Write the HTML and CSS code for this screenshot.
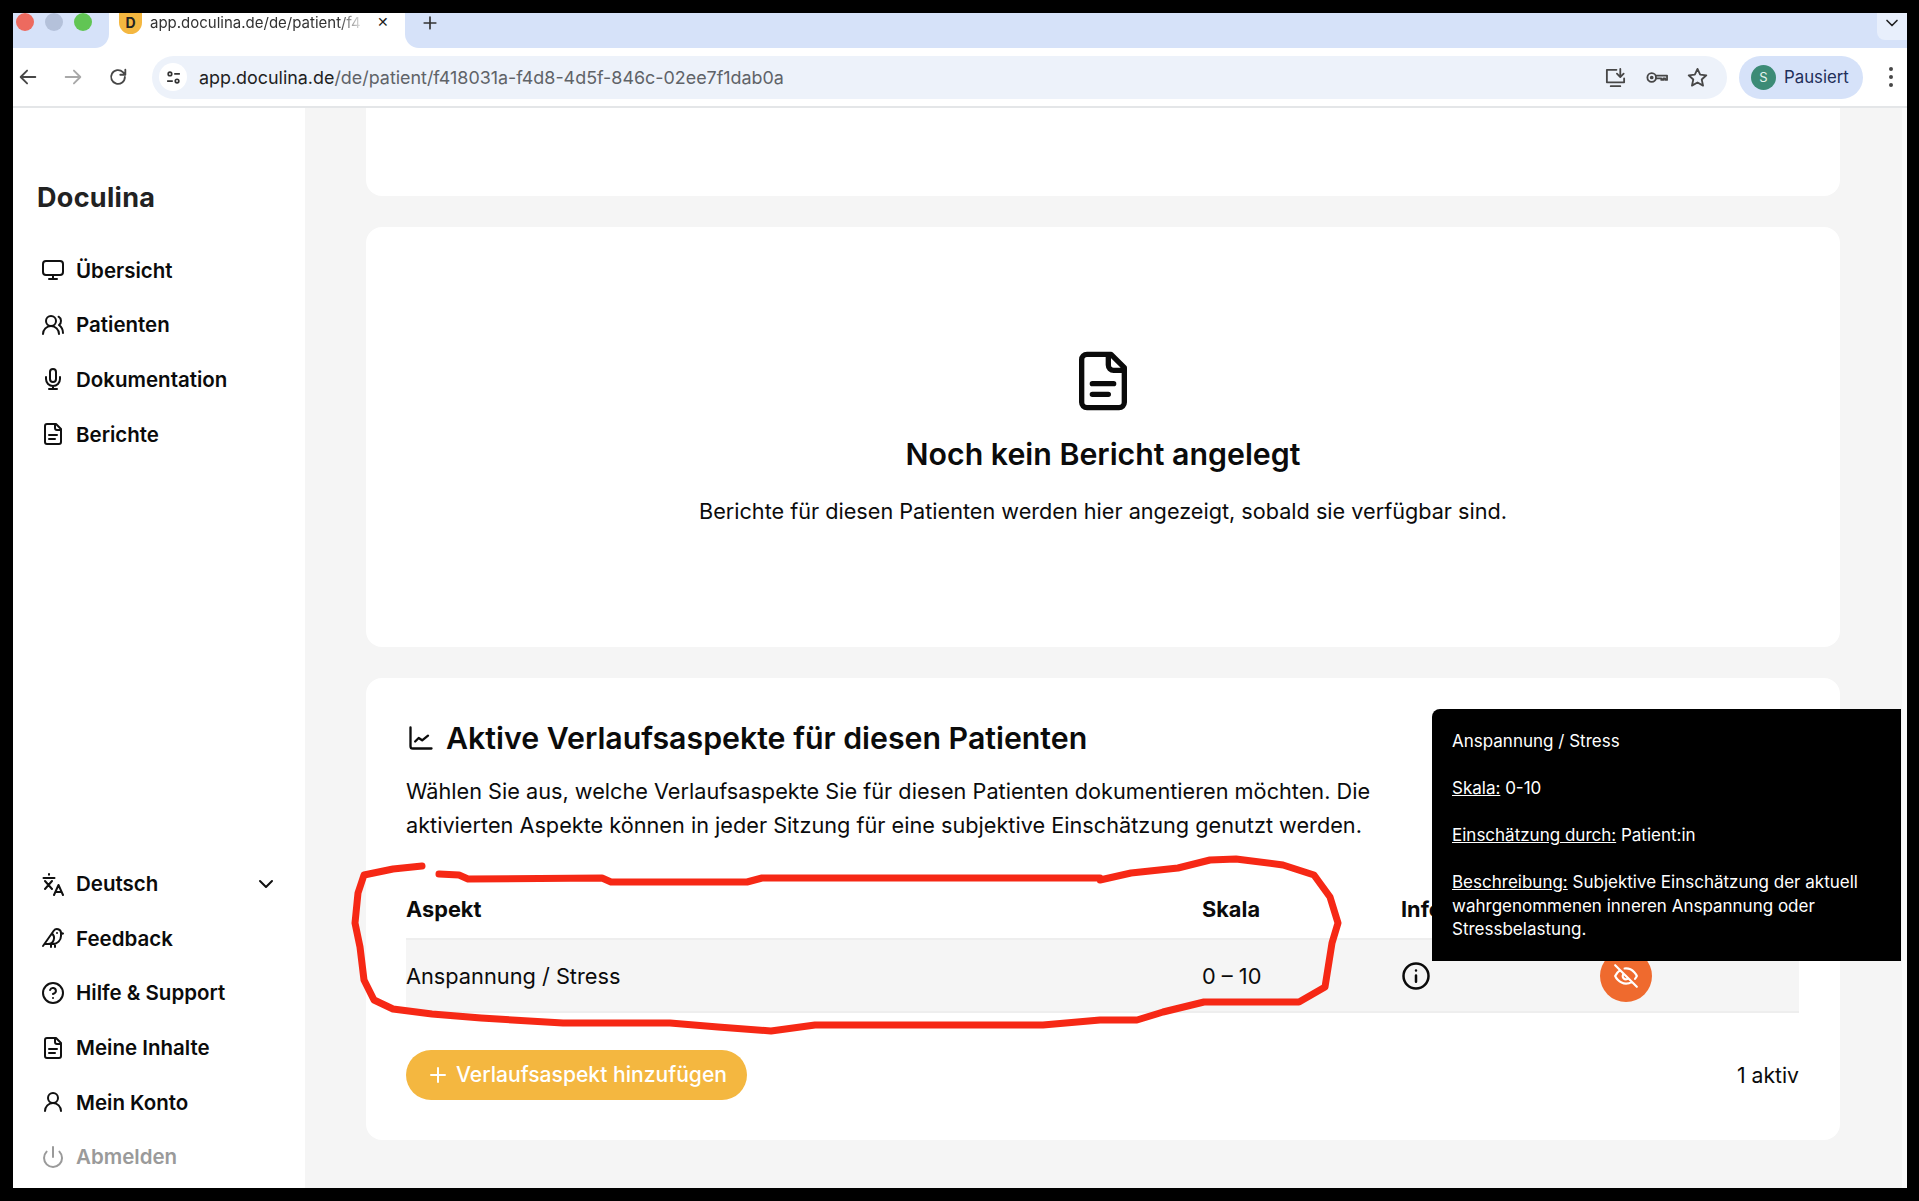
FILE: index.html
```html
<!DOCTYPE html>
<html lang="de">
<head>
<meta charset="utf-8">
<title>Doculina</title>
<link rel="stylesheet" href="styles.css">
</head>
<body>
<svg class="sprite" width="0" height="0" aria-hidden="true">
  <symbol id="i-monitor" viewBox="0 0 24 24"><rect x="2" y="3" width="20" height="14" rx="3"/><path d="M8 21h8M12 17v4"/></symbol>
  <symbol id="i-users" viewBox="0 0 24 24"><circle cx="10" cy="8" r="5"/><path d="M18 21a8 8 0 0 0-16 0M22 20c0-3.37-2-6.5-4-8a5 5 0 0 0-.45-8.3"/></symbol>
  <symbol id="i-mic" viewBox="0 0 24 24"><path d="M12 2a3 3 0 0 0-3 3v7a3 3 0 0 0 6 0V5a3 3 0 0 0-3-3ZM19 10v2a7 7 0 0 1-14 0v-2M12 19v3M8 22h8"/></symbol>
  <symbol id="i-file" viewBox="0 0 24 24"><path d="M15 2H6a2 2 0 0 0-2 2v16a2 2 0 0 0 2 2h12a2 2 0 0 0 2-2V7ZM14 2v4a2 2 0 0 0 2 2h4M16 13H8M14 17H8"/></symbol>
  <symbol id="i-lang" viewBox="0 0 24 24"><path d="M2.500 6h11M8 2v.8M4 9l7 8M11 9l-7 8M13 23l4.500-10 4.500 10M14.500 20h6"/></symbol>
  <symbol id="i-bird" viewBox="0 0 24 24"><path d="M16 7h.01M3.400 18H12a8 8 0 0 0 8-8V7a4 4 0 0 0-7.280-2.300L2 20M20 7l2 .5-2 .5M10 18v3M14 17.750V21M7 18a6 6 0 0 0 3.840-10.610"/></symbol>
  <symbol id="i-help" viewBox="0 0 24 24"><circle cx="12" cy="12" r="10"/><path d="M9.090 9a3 3 0 0 1 5.830 1c0 2-3 3-3 3M12 17h.01"/></symbol>
  <symbol id="i-user" viewBox="0 0 24 24"><circle cx="12" cy="8" r="5"/><path d="M20 21a8 8 0 0 0-16 0"/></symbol>
  <symbol id="i-power" viewBox="0 0 24 24"><path d="M12 2v10M18.400 6.600a9 9 0 1 1-12.770.04"/></symbol>
  <symbol id="i-chevron" viewBox="0 0 24 24"><path d="m6 9 6 6 6-6"/></symbol>
  <symbol id="i-chart" viewBox="0 0 24 24"><path d="M3 3v16a2 2 0 0 0 2 2h16M7 15l3-3 3 2 5-4"/></symbol>
  <symbol id="i-info" viewBox="0 0 24 24"><circle cx="12" cy="12" r="10"/><path d="M12 16.500v-5M12 7.500h.01"/></symbol>
  <symbol id="i-eyeoff" viewBox="0 0 24 24"><path d="M9.880 9.880a3 3 0 1 0 4.240 4.240M10.730 5.080A10.430 10.430 0 0 1 12 5c7 0 10 7 10 7a13.160 13.160 0 0 1-1.670 2.680M6.610 6.610A13.526 13.526 0 0 0 2 12s3 7 10 7a9.740 9.740 0 0 0 5.390-1.610M2 2l20 20"/></symbol>
  <symbol id="i-plus" viewBox="0 0 24 24"><path d="M5 12h14M12 5v14"/></symbol>
</svg>

<div class="frame">
  <header class="tabstrip">
    <div class="lights">
      <span class="light light-red"></span>
      <span class="light light-grey"></span>
      <span class="light light-green"></span>
    </div>
    <div class="tab">
      <span class="favicon">D</span>
      <span class="tab-title">app.doculina.de/de/patient/f4</span>
      <span class="tab-close">✕</span>
    </div>
    <div class="tab-rest">
      <svg class="tab-new"><use href="#i-plus"/></svg>
      <div class="tab-menu"><svg class="ico-chrome-chev"><use href="#i-chevron"/></svg></div>
    </div>
  </header>

  <div class="toolbar">
    <svg class="nav-btn" viewBox="0 0 24 24"><path d="M20 12H5M11 5l-7 7 7 7"/></svg>
    <svg class="nav-btn nav-off" viewBox="0 0 24 24"><path d="M4 12h15M13 5l7 7-7 7"/></svg>
    <svg class="nav-btn nav-reload" viewBox="0 0 24 24"><path d="M19.500 12a7.500 7.500 0 1 1-2.200-5.300L20 9.500M20 4v5.500h-5.500"/></svg>
    <div class="omnibox">
      <span class="site-ic"><svg viewBox="0 0 24 24"><circle cx="7" cy="7" r="2.500"/><circle cx="17" cy="17" r="2.500"/><path d="M13 7h8M3 17h8"/></svg></span>
      <span class="url"><b>app.doculina.de</b>/de/patient/f418031a-f4d8-4d5f-846c-02ee7f1dab0a</span>
      <span class="omni-icons">
        <svg viewBox="0 0 24 24"><path d="M21 13v4H3V4h10M7 21h10M17 3v8M13.500 8l3.500 3.500L20.500 8"/></svg>
        <svg viewBox="0 0 24 24"><circle cx="7" cy="12" r="4.500"/><circle cx="7" cy="12" r="1" /><path d="M11.500 10H23v4.500h-2V13h-2v1.500h-2V13h-5.500"/></svg>
        <svg viewBox="0 0 24 24"><path d="m12 3 2.800 6 6.400.7-4.800 4.400 1.400 6.400L12 17.200l-5.800 3.300 1.400-6.400-4.800-4.400L9.200 9Z"/></svg>
      </span>
    </div>
    <div class="profile"><span class="avatar">S</span><span class="profile-name">Pausiert</span></div>
    <span class="kebab"><i></i><i></i><i></i></span>
  </div>

  <div class="app">
    <aside class="sidebar">
      <div class="logo">Doculina</div>
      <nav class="nav">
        <a class="nav-item"><svg class="ic"><use href="#i-monitor"/></svg>Übersicht</a>
        <a class="nav-item"><svg class="ic"><use href="#i-users"/></svg>Patienten</a>
        <a class="nav-item"><svg class="ic"><use href="#i-mic"/></svg>Dokumentation</a>
        <a class="nav-item"><svg class="ic"><use href="#i-file"/></svg>Berichte</a>
      </nav>
      <nav class="nav nav-bottom">
        <a class="nav-item"><svg class="ic"><use href="#i-lang"/></svg>Deutsch<svg class="ic-chev"><use href="#i-chevron"/></svg></a>
        <a class="nav-item"><svg class="ic"><use href="#i-bird"/></svg>Feedback</a>
        <a class="nav-item"><svg class="ic"><use href="#i-help"/></svg>Hilfe &amp; Support</a>
        <a class="nav-item"><svg class="ic"><use href="#i-file"/></svg>Meine Inhalte</a>
        <a class="nav-item"><svg class="ic"><use href="#i-user"/></svg>Mein Konto</a>
        <a class="nav-item nav-muted"><svg class="ic"><use href="#i-power"/></svg>Abmelden</a>
      </nav>
    </aside>

    <main class="main">
      <section class="card card-stub"></section>

      <section class="card card-empty">
        <svg class="empty-ic"><use href="#i-file"/></svg>
        <h2 class="empty-title">Noch kein Bericht angelegt</h2>
        <p class="empty-text">Berichte für diesen Patienten werden hier angezeigt, sobald sie verfügbar sind.</p>
      </section>

      <section class="card card-aspects">
        <h2 class="aspects-title"><svg class="title-ic"><use href="#i-chart"/></svg>Aktive Verlaufsaspekte für diesen Patienten</h2>
        <p class="aspects-text">Wählen Sie aus, welche Verlaufsaspekte Sie für diesen Patienten dokumentieren möchten. Die aktivierten Aspekte können in jeder Sitzung für eine subjektive Einschätzung genutzt werden.</p>
        <div class="table">
          <div class="trow thead">
            <span>Aspekt</span><span>Skala</span><span>Info</span><span></span>
          </div>
          <div class="trow tbody">
            <span>Anspannung / Stress</span>
            <span>0 – 10</span>
            <span class="cell-ic"><svg class="info-ic"><use href="#i-info"/></svg></span>
            <span class="cell-action"><span class="eye-btn"><svg><use href="#i-eyeoff"/></svg></span></span>
          </div>
        </div>
        <div class="aspects-foot">
          <button class="add-btn"><svg><use href="#i-plus"/></svg>Verlaufsaspekt hinzufügen</button>
          <span class="count">1 aktiv</span>
        </div>
      </section>
    </main>
  </div>
</div>

<div class="tooltip">
  <p>Anspannung / Stress</p>
  <p><u>Skala:</u> 0-10</p>
  <p><u>Einschätzung durch:</u> Patient:in</p>
  <p><u>Beschreibung:</u> Subjektive Einschätzung der aktuell wahrgenommenen inneren Anspannung oder Stressbelastung.</p>
</div>

<svg class="scribble" viewBox="0 0 1919 1201" aria-hidden="true">
  <path d="M422 866 L393 869 L364 875 L358 893 L355 923 L360 947 L364 980 L374 1000 L393 1009 L432 1014 L481 1018 L563 1023 L670 1023 L718 1027 L771 1031 L815 1025 L1043 1025 L1100 1020 L1137 1020 L1163 1012 L1204 1002 L1299 1002 L1325 987 L1332 943 L1338 923 L1330 897 L1314 875 L1283 865 L1236 859 L1210 860 L1178 868 L1131 873 L1100 880 L1100 878 L762 878 L747 882 L611 882 L602 878 L468 879 L459 875 L439 874"/>
</svg>
</body>
</html>
```
FILE: styles.css
```css
* { box-sizing: border-box; }
html, body { margin: 0; height: 100%; }
body {
  position: relative;
  width: 1919px;
  height: 1201px;
  overflow: hidden;
  background: #000;
  padding: 13px 12px 13px 13px;
  font-family: Inter, "Noto Sans", sans-serif;
  color: #0b0b0b;
}
.sprite { position: absolute; }
symbol { fill: none; stroke: currentColor; stroke-width: 2; stroke-linecap: round; stroke-linejoin: round; }

.frame { height: 100%; display: flex; flex-direction: column; background: #fff; overflow: hidden; }

/* browser chrome */
.tabstrip { height: 35px; flex: none; display: flex; background: #fff; align-items: stretch; }
.lights { width: 96px; flex: none; height: 35px; display: flex; gap: 11px; padding-left: 3px; background: #d6e2f9; border-radius: 0 0 14px 0; }
.light { width: 18px; height: 18px; border-radius: 50%; flex: none; }
.light-red { background: #ed6a5f; }
.light-grey { background: #b4c1da; }
.light-green { background: #61c554; }
.tab { width: 296px; flex: none; background: #fff; display: flex; align-items: flex-start; padding: 0 14px 0 10px; }
.favicon { width: 23px; height: 21px; border-radius: 0 0 12px 12px; background: #f4b740; font: 700 14px/19px Inter, sans-serif; text-align: center; color: #222; flex: none; }
.tab-title { margin-left: 8px; width: 214px; flex: none; font: 400 15px/19px Inter, sans-serif; color: #333; white-space: nowrap; -webkit-mask-image: linear-gradient(90deg, #000 88%, transparent); mask-image: linear-gradient(90deg, #000 88%, transparent); }
.tab-close { margin-left: 13px; font: 400 14px/19px "DejaVu Sans", sans-serif; color: #222; }
.tab-rest { flex: 1; display: flex; background: #d6e2f9; border-radius: 0 0 0 14px; }
.tab-new { width: 20px; height: 20px; margin: 0 0 0 15px; color: #333; }
.tab-menu { margin-left: auto; width: 30px; height: 27px; background: #e8effc; border-radius: 0 0 0 8px; display: flex; justify-content: center; align-items: flex-start; }
.ico-chrome-chev { width: 20px; height: 20px; color: #222; }

.toolbar { height: 60px; flex: none; display: flex; align-items: center; border-bottom: 2px solid #e4e6e8; padding: 0 0 0 4px; background: #fff; }
.nav-btn { width: 22px; height: 22px; fill: none; stroke: #474747; stroke-width: 2; stroke-linecap: round; stroke-linejoin: round; flex: none; margin-right: 23px; }
.nav-off { stroke: #a8a8a8; }
.nav-reload { margin-right: 23px; }
.omnibox { width: 1575px; height: 43px; background: #edf2fa; border-radius: 22px; display: flex; align-items: center; padding: 0 18px 0 7px; flex: none; }
.site-ic { width: 28px; height: 28px; border-radius: 50%; background: #fff; display: flex; align-items: center; justify-content: center; flex: none; }
.site-ic svg { width: 17px; height: 17px; fill: none; stroke: #333; stroke-width: 2.400; }
.url { margin-left: 12px; font-size: 17.900px; color: #5f6368; white-space: nowrap; }
.url b { font-weight: 400; color: #1f1f1f; }
.omni-icons { margin-left: auto; display: flex; gap: 18px; }
.omni-icons svg { width: 23px; height: 23px; fill: none; stroke: #474747; stroke-width: 1.900; stroke-linejoin: round; stroke-linecap: round; }
.profile { margin-left: 12px; width: 124px; height: 43px; background: #d6e2f9; border-radius: 22px; display: flex; align-items: center; padding-left: 12px; flex: none; }
.avatar { width: 25px; height: 25px; border-radius: 50%; background: #3c8b76; color: #e4f3ee; font-size: 13px; line-height: 25px; text-align: center; flex: none; }
.profile-name { margin-left: 8px; font-size: 16.800px; font-weight: 400; color: #1f2f5a; }
.kebab { margin-left: 26px; display: flex; flex-direction: column; gap: 4px; }
.kebab i { width: 4px; height: 4px; border-radius: 50%; background: #474747; display: block; }

/* app */
.app { flex: 1; min-height: 0; display: flex; }
.sidebar { width: 292px; flex: none; display: flex; flex-direction: column; padding: 72px 0 4px 24px; background: #fff; }
.logo { font-size: 27px; font-weight: 700; line-height: 36px; letter-spacing: 0.300px; color: #222; }
.nav { display: flex; flex-direction: column; margin-top: 27px; }
.nav-bottom { margin-top: auto; }
.nav-item { height: 54.600px; display: flex; align-items: center; gap: 11px; font-size: 20.500px; font-weight: 600; color: #0b0b0b; padding-left: 4px; }
.ic { width: 24px; height: 24px; color: #111; flex: none; }
.ic-chev { width: 24px; height: 24px; margin-left: auto; margin-right: 27px; color: #111; }
.nav-muted, .nav-muted .ic { color: #9a9a9a; }

.main { flex: 1; min-width: 0; background: #f5f5f5; padding: 0 62px 0 61px; border-right: 5px solid #fafafa; display: flex; flex-direction: column; gap: 31px; }
.card { background: #fff; border-radius: 16px; flex: none; }
.card-stub { height: 88px; border-radius: 0 0 16px 16px; }
.card-empty { height: 420px; display: flex; flex-direction: column; align-items: center; padding-top: 122px; }
.empty-ic { width: 64px; height: 64px; color: #0b0b0b; }
.empty-title { margin: 19px 0 0; font-size: 30.300px; line-height: 44px; font-weight: 600; }
.empty-text { margin: 19px 0 0; font-size: 21.650px; line-height: 32px; }
.card-aspects { height: 462px; padding: 34px 41px 0 40px; }
.aspects-title { margin: 0; display: flex; align-items: center; gap: 11px; font-size: 30.300px; line-height: 52px; font-weight: 600; }
.title-ic { width: 28px; height: 28px; flex: none; margin-left: 1px; }
.aspects-text { margin: 10px 0 0; font-size: 21.700px; line-height: 34px; width: 1000px; }
.table { display: flex; flex-direction: column; }
.trow { display: grid; grid-template-columns: 796px 199px 180px 1fr; align-items: center; font-size: 21.750px; }
.thead { height: 98px; padding-top: 37px; font-weight: 700; border-bottom: 2px solid #eee; }
.tbody { height: 73px; background: #f5f5f5; border-bottom: 2px solid #eee; }
.cell-ic, .cell-action { display: flex; align-items: center; }
.info-ic { width: 30px; height: 30px; color: #0b0b0b; }
.eye-btn { width: 52px; height: 52px; border-radius: 50%; background: #ef6a2e; display: flex; align-items: center; justify-content: center; color: #fff; margin-left: 19px; }
.eye-btn svg { width: 26px; height: 26px; }
.aspects-foot { margin-top: 37px; display: flex; justify-content: space-between; align-items: center; }
.add-btn { width: 341px; height: 50px; border: 0; border-radius: 25px; background: #f4b740; color: #fff; font: 500 21.100px/50px Inter, sans-serif; display: flex; align-items: center; gap: 6px; padding: 0 0 0 20px; }
.add-btn svg { width: 24px; height: 24px; flex: none; }
.count { font-size: 21.200px; }

/* tooltip over the table */
.tooltip { position: absolute; left: 1432px; top: 709px; width: 469px; height: 252px; background: #000; color: #fff; border-radius: 8px 0 0 0; padding: 21px 20px 0; font-size: 17px; line-height: 23.500px; }
.tooltip p { margin: 0 0 23.500px; }

/* hand-drawn annotation */
.scribble { position: absolute; left: 0; top: 0; width: 1919px; height: 1201px; pointer-events: none; fill: none; stroke: #f62815; stroke-width: 7; stroke-linecap: round; stroke-linejoin: round; }
```
